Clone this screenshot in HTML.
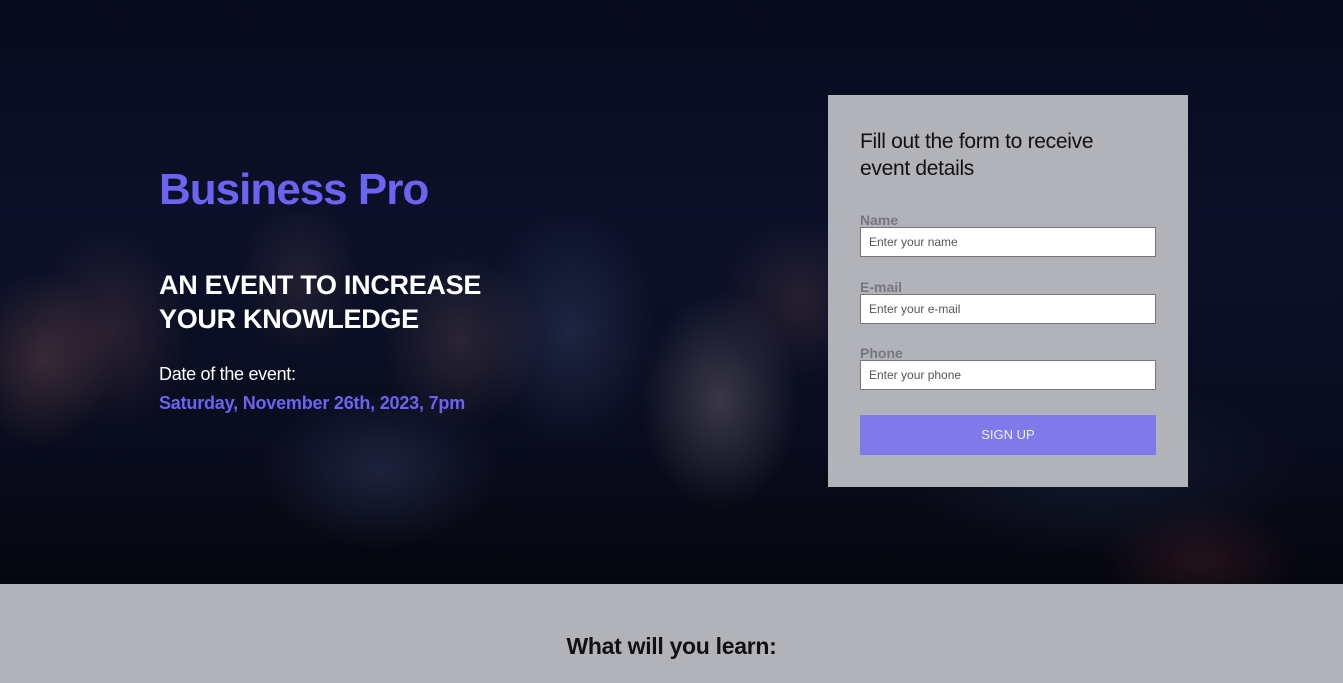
<!DOCTYPE html>
<html><head><meta charset="utf-8"><style>
*{margin:0;padding:0;box-sizing:border-box}
body{width:1343px;height:683px;overflow:hidden;font-family:"Liberation Sans",sans-serif;background:#b2b3b8}
.hero{position:absolute;left:0;top:0;width:1343px;height:584px;overflow:hidden;
background:
radial-gradient(ellipse 70px 90px at 40px 360px,rgba(120,80,80,.4),transparent),
radial-gradient(ellipse 80px 100px at 110px 330px,rgba(90,60,70,.4),transparent),
radial-gradient(ellipse 60px 80px at 300px 280px,rgba(80,60,70,.35),transparent),
radial-gradient(ellipse 80px 90px at 460px 340px,rgba(90,70,80,.4),transparent),
radial-gradient(ellipse 90px 120px at 570px 330px,rgba(60,70,110,.4),transparent),
radial-gradient(ellipse 80px 110px at 720px 400px,rgba(130,120,130,.4),transparent),
radial-gradient(ellipse 80px 80px at 800px 300px,rgba(90,60,70,.35),transparent),
radial-gradient(ellipse 120px 80px at 380px 470px,rgba(60,70,110,.4),transparent),
radial-gradient(ellipse 100px 60px at 1200px 560px,rgba(90,40,50,.35),transparent),
radial-gradient(ellipse 200px 90px at 1100px 470px,rgba(40,50,80,.35),transparent),
linear-gradient(#070a1c 0%,#0c1129 40%,#090c1e 75%,#05060d 100%)}
.t1{position:absolute;left:159px;top:165px;color:#6c63f2;font-size:44px;font-weight:bold;letter-spacing:-1px}
.t2{position:absolute;left:159px;top:268px;color:#fff;font-size:27px;font-weight:bold;line-height:34px;letter-spacing:-0.3px}
.t3{position:absolute;left:159px;top:364px;color:#fff;font-size:18px;letter-spacing:-0.3px}
.t4{position:absolute;left:159px;top:393px;color:#6c63f2;font-size:18px;font-weight:bold;letter-spacing:-0.2px}
.form{position:absolute;left:828px;top:95px;width:360px;height:392px;background:#b2b3b8;padding:0 32px}
.form h3{font-weight:normal;font-size:21px;line-height:27px;color:#111;margin-top:33px;height:85px;letter-spacing:-0.3px}
.lab{font-size:14px;font-weight:bold;color:#76767f;height:14px;line-height:14px}
.inp{width:296px;height:30px;background:#fff;border:1px solid #777;font-size:12px;color:#555;padding:7px 8px}
.btn{width:296px;height:40px;background:#7f79ea;color:#eee;font-size:13px;text-align:center;line-height:40px;margin-top:25px}
.bot{position:absolute;top:633px;width:100%;text-align:center;font-size:23px;font-weight:bold;color:#111;letter-spacing:-0.3px}
</style></head><body>
<div class="hero"></div>
<div class="t1">Business Pro</div>
<div class="t2">AN EVENT TO INCREASE<br>YOUR KNOWLEDGE</div>
<div class="t3">Date of the event:</div>
<div class="t4">Saturday, November 26th, 2023, 7pm</div>
<div class="form">
<h3>Fill out the form to receive<br>event details</h3>
<div class="lab">Name</div><div class="inp">Enter your name</div>
<div class="lab" style="margin-top:23px">E-mail</div><div class="inp">Enter your e-mail</div>
<div class="lab" style="margin-top:22px">Phone</div><div class="inp">Enter your phone</div>
<div class="btn">SIGN UP</div>
</div>
<div class="bot">What will you learn:</div>
</body></html>
